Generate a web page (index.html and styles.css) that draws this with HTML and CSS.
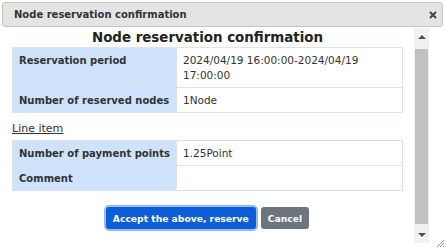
FILE: index.html
```html
<!DOCTYPE html>
<html lang="en">
<head>
  <meta charset="UTF-8">
  <title>Node reservation confirmation</title>
  <link rel="stylesheet" href="styles.css">
</head>
<body>
  <div class="dialog">
    <div class="titlebar">
      <span class="title">Node reservation confirmation</span>
      <button class="close" title="Close">
        <svg width="8" height="8" viewBox="0 0 8 8"><path d="M1 1L7 7M7 1L1 7" stroke="#454545" stroke-width="2"/></svg>
      </button>
    </div>

    <div class="body">
      <div class="content">
        <h2>Node reservation confirmation</h2>
        <table class="info">
          <tr>
            <th>Reservation period</th>
            <td>2024/04/19 16:00:00-2024/04/19 17:00:00</td>
          </tr>
          <tr>
            <th>Number of reserved nodes</th>
            <td>1Node</td>
          </tr>
        </table>

        <p class="section"><u>Line item</u></p>
        <table class="info">
          <tr>
            <th>Number of payment points</th>
            <td>1.25Point</td>
          </tr>
          <tr>
            <th>Comment</th>
            <td></td>
          </tr>
        </table>

        <div class="actions">
          <button class="btn btn-primary">Accept the above, reserve</button>
          <button class="btn btn-secondary">Cancel</button>
        </div>
      </div>

      <!-- scrollbar drawn by hand, headless hides the native one -->
      <div class="scrollbar">
        <div class="arrow arrow-up"></div>
        <div class="thumb"></div>
        <div class="arrow arrow-down"></div>
      </div>
    </div>

    <svg class="resize" width="9" height="9" viewBox="0 0 9 9">
      <path d="M8 1L1 8M8 4L4 8M8 7L7 8" stroke="#999" stroke-width="1"/>
    </svg>
  </div>
</body>
</html>
```

FILE: styles.css
```css
body {
  margin: 0;
  font-family: "DejaVu Sans", Verdana, sans-serif;
  color: #333;
  background: #fff;
}

.dialog {
  position: relative;
  width: 446px;
  height: 249px;
  padding: 2px;
  box-sizing: border-box;
}

.titlebar {
  display: flex;
  align-items: center;
  justify-content: space-between;
  height: 23px;
  padding: 0 4px 0 11px;
  border: 1px solid #c5c5c5;
  border-radius: 3px;
  background: #e4e4e4;
  margin-right: 1px;
}

.title {
  font-size: 10px;
  font-weight: bold;
  color: #333;
}

.close {
  border: none;
  background: none;
  padding: 0;
  width: 10px;
  height: 10px;
  display: flex;
  align-items: center;
  justify-content: center;
}

.body {
  display: flex;
  height: 215px;
  margin-top: 1px;
  margin-right: 15px;
}

.content {
  flex: 1;
  padding: 0 11px 0 10px;
  overflow: hidden;
}

h2 {
  margin: 0;
  padding-top: 1px;
  font-size: 13.4px;
  text-align: center;
  line-height: 17px;
  color: #222;
}

.info {
  width: 100%;
  border-collapse: collapse;
  margin-top: 1px;
}

.info th,
.info td {
  border: 1px solid #dde2e8;
  padding: 5px 6px 4px;
  line-height: 15px;
  text-align: left;
  vertical-align: top;
}

.info th {
  width: 151px;
  background: #cfe2fb;
  font-size: 10px;
  font-weight: bold;
  color: #333;
}

.info td {
  height: 15px;
  font-size: 10.5px;
}

.section {
  margin: 8px 0 3px;
  font-size: 11px;
  line-height: 16px;
}

.actions {
  display: flex;
  justify-content: center;
  gap: 5px;
  margin-top: 16px;
}

.btn {
  border: none;
  border-radius: 3px;
  color: #fff;
  font-family: "DejaVu Sans", Verdana, sans-serif;
  font-size: 9.2px;
  font-weight: bold;
  padding: 0 7px;
  height: 22px;
}

.btn-primary {
  background: #0b5ed7;
  box-shadow: 0 0 0 2px #98bbf0;
}

.btn-secondary {
  background: #6c757d;
}

.scrollbar {
  display: flex;
  flex-direction: column;
  width: 15px;
  background: #f1f1f1;
}

.arrow {
  height: 17px;
  display: flex;
  align-items: center;
  justify-content: center;
}

.arrow::before {
  content: "";
  border-left: 4px solid transparent;
  border-right: 4px solid transparent;
}

.arrow-up::before {
  border-bottom: 4px solid #505050;
}

.arrow-down::before {
  border-top: 4px solid #505050;
}

.thumb {
  flex: 1;
  margin: 4px 1px 2px;
  background: #c1c1c1;
}

.resize {
  position: absolute;
  right: 1px;
  bottom: 1px;
}
```
